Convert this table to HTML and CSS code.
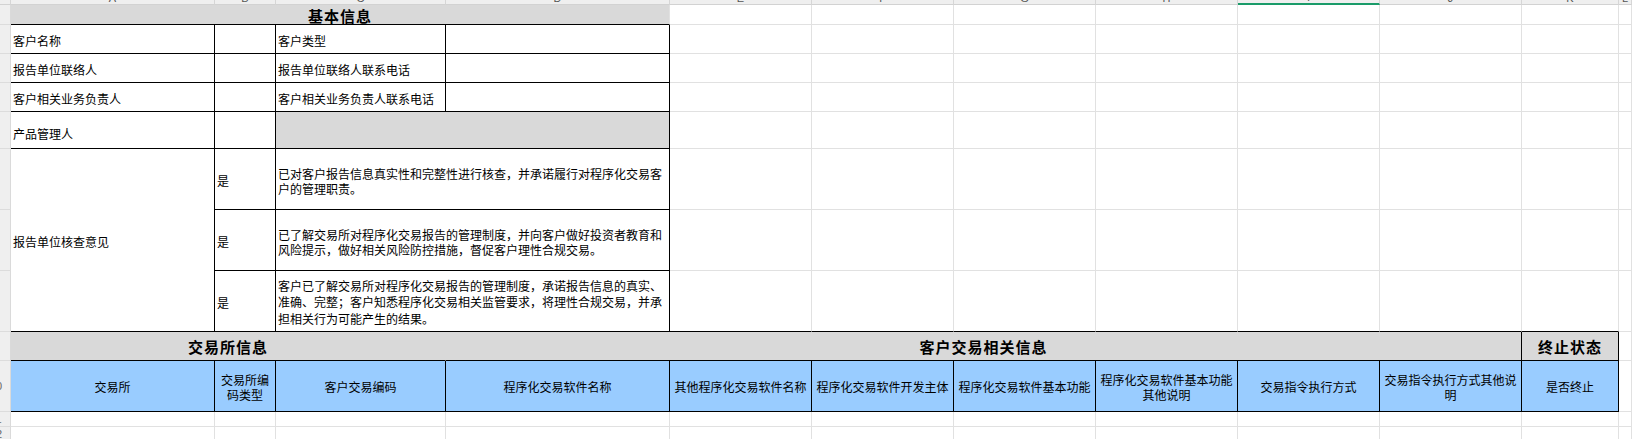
FILE: index.html
```html
<!DOCTYPE html>
<html lang="zh-CN">
<head>
<meta charset="utf-8">
<title>程序化交易报告</title>
<link rel="stylesheet" href="styles.css">
</head>
<body>
<div class="sheet">
  <div class="ch"></div>
  <div class="ch"><span>A</span></div>
  <div class="ch"><span>B</span></div>
  <div class="ch"><span>C</span></div>
  <div class="ch"><span>D</span></div>
  <div class="ch"><span>E</span></div>
  <div class="ch"><span>F</span></div>
  <div class="ch"><span>G</span></div>
  <div class="ch"><span>H</span></div>
  <div class="ch sel"><span>I</span></div>
  <div class="ch"><span>J</span></div>
  <div class="ch"><span>K</span></div>
  <div class="ch"><span>L</span></div>

  <div class="rh"><span class="num">1</span></div>
  <div class="c grey hd s4 title">基本信息</div>
  <div class="c"></div><div class="c"></div><div class="c"></div><div class="c"></div>
  <div class="c"></div><div class="c"></div><div class="c"></div><div class="c"></div>

  <div class="rh"><span class="num">2</span></div>
  <div class="c b">客户名称</div>
  <div class="c b"></div>
  <div class="c b">客户类型</div>
  <div class="c b"></div>
  <div class="c"></div><div class="c"></div><div class="c"></div><div class="c"></div>
  <div class="c"></div><div class="c"></div><div class="c"></div><div class="c"></div>

  <div class="rh"><span class="num">3</span></div>
  <div class="c b">报告单位联络人</div>
  <div class="c b"></div>
  <div class="c b">报告单位联络人联系电话</div>
  <div class="c b"></div>
  <div class="c"></div><div class="c"></div><div class="c"></div><div class="c"></div>
  <div class="c"></div><div class="c"></div><div class="c"></div><div class="c"></div>

  <div class="rh"><span class="num">4</span></div>
  <div class="c b">客户相关业务负责人</div>
  <div class="c b"></div>
  <div class="c b">客户相关业务负责人联系电话</div>
  <div class="c b"></div>
  <div class="c"></div><div class="c"></div><div class="c"></div><div class="c"></div>
  <div class="c"></div><div class="c"></div><div class="c"></div><div class="c"></div>

  <div class="rh"><span class="num">5</span></div>
  <div class="c b low">产品管理人</div>
  <div class="c b"></div>
  <div class="c b grey s2"></div>
  <div class="c"></div><div class="c"></div><div class="c"></div><div class="c"></div>
  <div class="c"></div><div class="c"></div><div class="c"></div><div class="c"></div>

  <div class="rh"><span class="num">6</span></div>
  <div class="c b r3">报告单位核查意见</div>
  <div class="c b">是</div>
  <div class="c b s2 para">已对客户报告信息真实性和完整性进行核查，并承诺履行对程序化交易客<br>户的管理职责。</div>
  <div class="c"></div><div class="c"></div><div class="c"></div><div class="c"></div>
  <div class="c"></div><div class="c"></div><div class="c"></div><div class="c"></div>

  <div class="rh"><span class="num">7</span></div>
  <div class="c b">是</div>
  <div class="c b s2 para">已了解交易所对程序化交易报告的管理制度，并向客户做好投资者教育和<br>风险提示，做好相关风险防控措施，督促客户理性合规交易。</div>
  <div class="c"></div><div class="c"></div><div class="c"></div><div class="c"></div>
  <div class="c"></div><div class="c"></div><div class="c"></div><div class="c"></div>

  <div class="rh"><span class="num">8</span></div>
  <div class="c b">是</div>
  <div class="c b s2 para loose">客户已了解交易所对程序化交易报告的管理制度，承诺报告信息的真实、<br>准确、完整；客户知悉程序化交易相关监管要求，将理性合规交易，并承<br>担相关行为可能产生的结果。</div>
  <div class="c bb"></div><div class="c bb"></div><div class="c bb"></div><div class="c bb"></div>
  <div class="c bb"></div><div class="c bb"></div><div class="c bb"></div><div class="c"></div>

  <div class="rh"><span class="num">9</span></div>
  <div class="c grey hd s3 merged">交易所信息</div>
  <div class="c b grey hd s7">客户交易相关信息</div>
  <div class="c b grey hd">终止状态</div>
  <div class="c"></div>

  <div class="rh"><span class="num">10</span></div>
  <div class="c b blue">交易所</div>
  <div class="c b blue">交易所编码类型</div>
  <div class="c b blue">客户交易编码</div>
  <div class="c b blue">程序化交易软件名称</div>
  <div class="c b blue">其他程序化交易软件名称</div>
  <div class="c b blue">程序化交易软件开发主体</div>
  <div class="c b blue">程序化交易软件基本功能</div>
  <div class="c b blue">程序化交易软件基本功能其他说明</div>
  <div class="c b blue">交易指令执行方式</div>
  <div class="c b blue">交易指令执行方式其他说明</div>
  <div class="c b blue">是否终止</div>
  <div class="c"></div>

  <div class="rh"><span class="num">11</span></div>
  <div class="c"></div><div class="c"></div><div class="c"></div><div class="c"></div>
  <div class="c"></div><div class="c"></div><div class="c"></div><div class="c"></div>
  <div class="c"></div><div class="c"></div><div class="c"></div><div class="c"></div>

  <div class="rh"><span class="num">12</span></div>
  <div class="c"></div><div class="c"></div><div class="c"></div><div class="c"></div>
  <div class="c"></div><div class="c"></div><div class="c"></div><div class="c"></div>
  <div class="c"></div><div class="c"></div><div class="c"></div><div class="c"></div>

  <div class="rh"><span class="num">13</span></div>
  <div class="c"></div><div class="c"></div><div class="c"></div><div class="c"></div>
  <div class="c"></div><div class="c"></div><div class="c"></div><div class="c"></div>
  <div class="c"></div><div class="c"></div><div class="c"></div><div class="c"></div>
</div>
</body>
</html>
```

FILE: styles.css
```css
* { box-sizing: border-box; }

html, body {
  margin: 0;
  padding: 0;
  background: #ffffff;
}

body {
  width: 1632px;
  height: 439px;
  overflow: hidden;
  font-family: "Noto Sans CJK SC", "Noto Sans", sans-serif;
  font-size: 12px;
  color: #000;
}

.sheet {
  display: grid;
  grid-template-columns: 11px 204px 61px 170px 224px repeat(6, 142px) 97px 1fr;
  grid-template-rows: 5px 20px 29px 29px 29px 37px 61px 61px 61px 29px 51px 15px 15px 18px;
  width: 1632px;
}

/* column header */
.ch {
  background: #efefef;
  border-right: 1px solid #d6d6d6;
  border-bottom: 1px solid #d2d2d2;
  display: flex;
  justify-content: center;
  align-items: flex-end;
  overflow: hidden;
}
.ch span {
  font-family: "Liberation Sans", sans-serif;
  font-size: 11px;
  line-height: 11px;
  color: #555;
}
.ch.sel {
  border-bottom: 2px solid #1a9b69;
}

/* row header */
.rh {
  background: #efefef;
  border-right: 1px solid #dadada;
  border-bottom: 1px solid #dcdcdc;
  display: flex;
  align-items: center;
  overflow: hidden;
}
.rh .num {
  flex: none;
  width: 30px;
  margin-left: -19px;
  text-align: center;
  font-family: "Liberation Sans", sans-serif;
  font-size: 11px;
  color: #666;
}

/* cells */
.c {
  border-right: 1px solid #e1e1e1;
  border-bottom: 1px solid #e1e1e1;
  display: flex;
  align-items: center;
  padding: 3px 2px 0 2px;
  line-height: 15px;
  min-width: 0;
  overflow: hidden;
  white-space: normal;
}

.b {
  border-right-color: #000;
  border-bottom-color: #000;
}
.bb {
  border-bottom-color: #000;
}

.grey { background: #d9d9d9; }

.blue {
  background: #99ccff;
  justify-content: center;
  text-align: center;
  padding-top: 1px;
}

.hd {
  justify-content: center;
  font-weight: 700;
  font-size: 15px;
  letter-spacing: 1px;
  padding-top: 1px;
}

.title {
  border-right-color: #e1e1e1;
  border-bottom-color: #000;
}

.merged {
  border-right-color: #d9d9d9;
  border-bottom-color: #000;
}

.low {
  padding-top: 7px;
}

.para { line-height: 15px; }
.para.loose { line-height: 16.5px; }

.s2 { grid-column: span 2; }
.s3 { grid-column: span 3; }
.s4 { grid-column: span 4; }
.s7 { grid-column: span 7; }
.r3 { grid-row: span 3; }
```
